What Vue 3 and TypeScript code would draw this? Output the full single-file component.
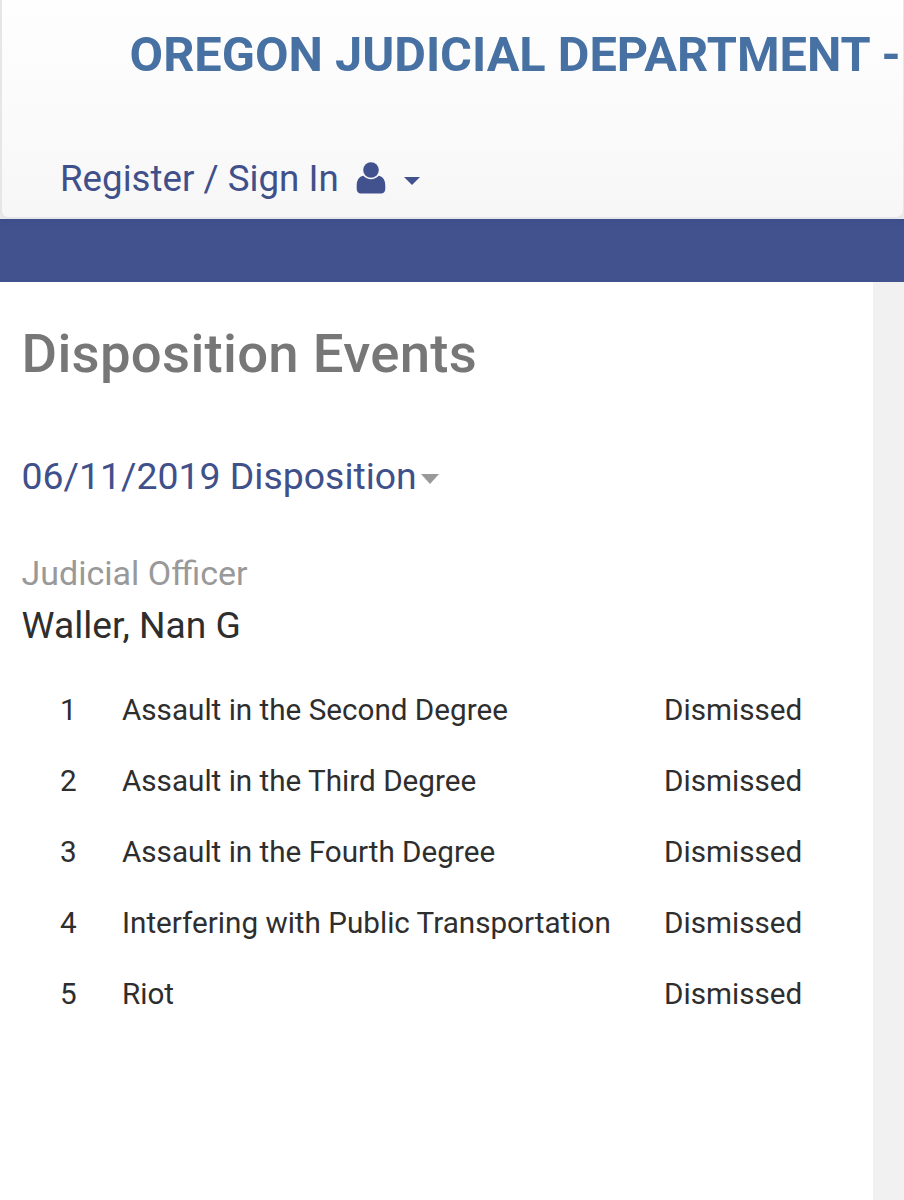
<script setup lang="ts">
interface Charge {
  no: number
  name: string
  result: string
}

const charges: Charge[] = [
  { no: 1, name: 'Assault in the Second Degree', result: 'Dismissed' },
  { no: 2, name: 'Assault in the Third Degree', result: 'Dismissed' },
  { no: 3, name: 'Assault in the Fourth Degree', result: 'Dismissed' },
  { no: 4, name: 'Interfering with Public Transportation', result: 'Dismissed' },
  { no: 5, name: 'Riot', result: 'Dismissed' },
]
</script>

<template>
  <div class="page">
    <header class="navbar">
      <div class="brand">OREGON JUDICIAL DEPARTMENT -</div>
      <a class="signin">
        <span>Register / Sign In</span>
        <svg class="user" viewBox="0 0 30 32" width="30" height="32">
          <circle cx="15" cy="8" r="7.8" />
          <path d="M7.300 13.800C2.500 14.600.7 18.500.7 24.500v2.200c0 3 1.600 4.800 4.300 4.800h20c2.700 0 4.300-1.800 4.300-4.800v-2.200c0-6-1.800-9.900-6.600-10.700-4.200 4.600-11.200 4.600-15.400 0z" />
        </svg>
        <svg class="caret" viewBox="0 0 16 8" width="16" height="8"><path d="M0 0h16L8 8z" /></svg>
      </a>
    </header>
    <div class="band"></div>
    <main class="content">
      <h1>Disposition Events</h1>
      <a class="event">
        <span>06/11/2019 Disposition</span>
        <svg class="caret-gray" viewBox="0 0 18 10" width="18" height="10"><path d="M0 0h18L9 10z" /></svg>
      </a>
      <div class="label">Judicial Officer</div>
      <div class="officer">Waller, Nan G</div>
      <div class="charges">
        <div v-for="c in charges" :key="c.no" class="row">
          <span>{{ c.no }}</span>
          <span>{{ c.name }}</span>
          <span>{{ c.result }}</span>
        </div>
      </div>
    </main>
  </div>
</template>

<style>
body {
  background: #f1f1f1;
}
</style>

<style scoped>
.page {
  box-sizing: border-box;
  width: 904px;
  height: 1200px;
  overflow: hidden;
  font-family: Roboto, sans-serif;
  color: #2e2e2e;
  white-space: nowrap;
  display: flex;
  flex-direction: column;
  background: linear-gradient(#e9e9ec 0 219px, #f1f1f1 219px);
}
.navbar {
  box-sizing: border-box;
  height: 219px;
  flex: none;
  border: 2px solid #e6e6e9;
  border-right-width: 1px;
  border-top: 0;
  border-radius: 0 0 8px 8px;
  background: linear-gradient(#fefefe, #f7f7f7);
  padding: 25px 0 0 58px;
}
.brand {
  margin-left: 69.6px;
  font-size: 48.7px;
  line-height: 60px;
  font-weight: 700;
  color: #4771a3;
}
.signin {
  display: flex;
  align-items: center;
  margin-top: 68px;
  height: 50px;
  font-size: 36.7px;
  color: #40508b;
}
.user {
  margin-left: 17.5px;
  fill: #41528f;
}
.caret {
  margin: 5px 0 0 17.5px;
  fill: #41528f;
}
.band {
  height: 63px;
  flex: none;
  background: linear-gradient(#3e4e8a, #41528f 12px);
}
.content {
  box-sizing: border-box;
  width: 873px;
  flex: 1;
  background: #fff;
  padding: 40px 0 0 21.6px;
}
h1 {
  margin: 0;
  font-size: 54.5px;
  letter-spacing: 0.28px;
  line-height: 63px;
  font-weight: 500;
  color: #777;
}
.event {
  display: flex;
  align-items: center;
  margin-top: 66px;
  height: 50px;
  font-size: 37.4px;
  color: #40508b;
}
.caret-gray {
  margin: 5px 0 0 4.5px;
  fill: #999;
}
.label {
  margin-top: 52px;
  font-size: 34px;
  line-height: 40px;
  color: #999;
}
.officer {
  margin-top: 8px;
  font-size: 37.2px;
  line-height: 49px;
}
.charges {
  margin-top: 25px;
  margin-left: 38.4px;
}
.row {
  display: grid;
  grid-template-columns: 62px 542px auto;
  height: 71px;
  font-size: 29.65px;
  line-height: 70px;
}
</style>
